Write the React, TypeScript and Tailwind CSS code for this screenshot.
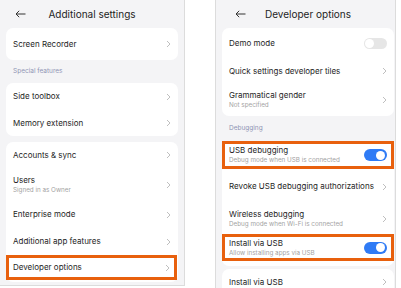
import { ReactNode } from 'react'

const font = { fontFamily: 'Inter, "Noto Sans", sans-serif' }

function Chevron() {
  return (
    <svg width="5" height="8" viewBox="0 0 5 8" className="shrink-0">
      <path d="M1 1l3 3-3 3" fill="none" stroke="#b8b8b8" strokeWidth="0.9" />
    </svg>
  )
}

function BackArrow() {
  return (
    <svg width="11" height="8" viewBox="0 0 11 8">
      <path d="M10.5 4H1M4.2 0.8L1 4l3.2 3.2" fill="none" stroke="#333" strokeWidth="1" />
    </svg>
  )
}

function Toggle({ on }: { on: boolean }) {
  return on ? (
    <div className="w-[23px] h-[12px] rounded-full bg-[#2f7bf5] flex items-center justify-end pr-[2px] shrink-0">
      <div className="w-[9px] h-[9px] rounded-full bg-white" />
    </div>
  ) : (
    <div className="w-[23px] h-[11px] rounded-full bg-[#e6e6e6] flex items-center pl-[1px] shrink-0">
      <div className="w-[9px] h-[9px] rounded-full bg-white" />
    </div>
  )
}

function Row({
  title,
  sub,
  h,
  right,
  boxed,
}: {
  title: string
  sub?: string
  h: string
  right?: ReactNode
  boxed?: boolean
}) {
  const pad = boxed
    ? 'border-[3px] border-[#e8600d] pl-[4px] pr-[4px]'
    : 'pl-[7px] pr-[7px]'
  return (
    <div className={`${h} flex items-center justify-between ${pad}`}>
      <div className="flex flex-col">
        <span className="text-[8px] leading-[11px] text-[#1e1e1e]">{title}</span>
        {sub && <span className="text-[6.3px] leading-[9px] text-[#a3a3a3]">{sub}</span>}
      </div>
      {right ?? <Chevron />}
    </div>
  )
}

function Header({ title, left }: { title: string; left: string }) {
  return (
    <div className="h-[28px] flex items-center relative">
      <div className={left}>
        <BackArrow />
      </div>
      <span className="absolute inset-x-0 text-center text-[10px] text-[#1e1e1e]">{title}</span>
    </div>
  )
}

export default function App() {
  return (
    <div className="w-[401px] h-[288px] bg-white flex overflow-hidden" style={font}>
      <div className="w-[185px] h-[286px] bg-[#f4f4f6] border-r border-b border-[#dcdcdc] px-[6px] shrink-0">
        <Header title="Additional settings" left="pl-[9px]" />
        <div className="bg-white rounded-[7px]">
          <Row title="Screen Recorder" h="h-[32px]" />
        </div>
        <div className="h-[23px] flex items-center pl-[7px] text-[6.5px] text-[#9095b5]">Special features</div>
        <div className="bg-white rounded-[7px]">
          <Row title="Side toolbox" h="h-[27px]" />
          <Row title="Memory extension" h="h-[26px]" />
        </div>
        <div className="bg-white rounded-[7px] mt-[6px] pb-[2px]">
          <Row title="Accounts & sync" h="h-[26px]" />
          <Row title="Users" sub="Signed in as Owner" h="h-[33px]" />
          <Row title="Enterprise mode" h="h-[27px]" />
          <Row title="Additional app features" h="h-[27px]" />
          <div className="pr-[1px]">
            <Row title="Developer options" h="h-[25px]" boxed />
          </div>
        </div>
      </div>

      <div className="w-[30px] shrink-0" />

      <div className="w-[181px] h-[288px] bg-[#f4f4f6] border-l border-r border-[#dcdcdc] pl-[6px] pr-[1px] shrink-0">
        <Header title="Developer options" left="pl-[13px]" />
        <div className="bg-white rounded-[7px]">
          <Row title="Demo mode" h="h-[30px]" right={<Toggle on={false} />} />
          <Row title="Quick settings developer tiles" h="h-[26px]" />
          <Row title="Grammatical gender" sub="Not specified" h="h-[32px]" />
        </div>
        <div className="h-[25px] flex items-center pl-[7px] text-[6.5px] text-[#9095b5]">Debugging</div>
        <div className="bg-white rounded-[7px] pb-[5px]">
          <Row title="USB debugging" sub="Debug mode when USB is connected" h="h-[28px]" boxed right={<Toggle on />} />
          <Row title="Revoke USB debugging authorizations" h="h-[35px]" />
          <Row title="Wireless debugging" sub="Debug mode when Wi-Fi is connected" h="h-[30px]" />
          <Row title="Install via USB" sub="Allow installing apps via USB" h="h-[27px]" boxed right={<Toggle on />} />
        </div>
        <div className="bg-white rounded-t-[7px] mt-[3px]">
          <Row title="Install via USB" h="h-[26px]" />
        </div>
      </div>
    </div>
  )
}
